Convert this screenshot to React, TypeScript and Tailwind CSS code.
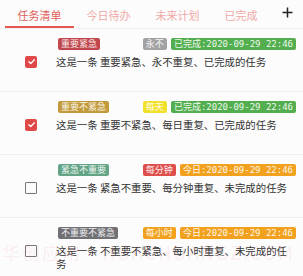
import React from "react";

type Task = {
  level: string;
  levelColor: string;
  repeat: string;
  repeatColor: string;
  date: string;
  dateColor: string;
  done: boolean;
  text: string;
};

const TABS = ["任务清单", "今日待办", "未来计划", "已完成"];

const TASKS: Task[] = [
  {
    level: "重要紧急",
    levelColor: "bg-[#c0474d]",
    repeat: "永不",
    repeatColor: "bg-[#a3a3a3]",
    date: "已完成:2020-09-29 22:46",
    dateColor: "bg-[#52ae4e]",
    done: true,
    text: "这是一条 重要紧急、永不重复、已完成的任务",
  },
  {
    level: "重要不紧急",
    levelColor: "bg-[#c39a3b]",
    repeat: "每天",
    repeatColor: "bg-[#f2e12c]",
    date: "已完成:2020-09-29 22:46",
    dateColor: "bg-[#52ae4e]",
    done: true,
    text: "这是一条 重要不紧急、每日重复、已完成的任务",
  },
  {
    level: "紧急不重要",
    levelColor: "bg-[#64a486]",
    repeat: "每分钟",
    repeatColor: "bg-[#de4f4c]",
    date: "今日:2020-09-29 22:46",
    dateColor: "bg-[#f1a11e]",
    done: false,
    text: "这是一条 紧急不重要、每分钟重复、未完成的任务",
  },
  {
    level: "不重要不紧急",
    levelColor: "bg-[#707075]",
    repeat: "每小时",
    repeatColor: "bg-[#f1a11e]",
    date: "今日:2020-09-29 22:46",
    dateColor: "bg-[#f1a11e]",
    done: false,
    text: "这是一条 不重要不紧急、每小时重复、未完成的任务",
  },
];

function Badge({ label, color }: { label: string; color: string }) {
  return (
    <span
      className={`flex h-[12px] items-center rounded-[2px] px-[3px] text-[9px] leading-none text-white/90 ${color}`}
      style={{ fontFamily: '"DejaVu Sans Mono", "Noto Sans CJK SC", monospace' }}
    >
      {label}
    </span>
  );
}

function Checkbox({ checked }: { checked: boolean }) {
  if (checked) {
    return (
      <span className="flex h-[12px] w-[12px] shrink-0 items-center justify-center rounded-[2px] bg-[#e04848]">
        <svg width="9" height="9" viewBox="0 0 10 10" fill="none">
          <path d="M2 5.2 L4.2 7.2 L8.2 3" stroke="white" strokeWidth="1.4" strokeLinecap="round" strokeLinejoin="round" />
        </svg>
      </span>
    );
  }
  return <span className="block h-[12px] w-[12px] shrink-0 rounded-[1px] border-[1.5px] border-[#777]" />;
}

export default function App() {
  return (
    <main
      className="relative h-[276px] w-[303px] overflow-hidden bg-[#fcfcfc]"
      style={{ fontFamily: '"Noto Sans CJK SC", "Noto Sans", sans-serif' }}
    >
      <div className="flex h-[28px] items-stretch pl-[5px] pr-[10px]">
        {TABS.map((tab, i) => (
          <div key={tab} className="flex flex-col">
            <span
              className={`flex-1 px-[12.5px] pt-[9px] text-[11px] leading-[13px] ${
                i === 0 ? "text-[#e0605a]" : "text-[#efa9a6]"
              }`}
            >
              {tab}
            </span>
            <span className={`h-[2px] ${i === 0 ? "bg-[#e2584f]" : "bg-transparent"}`} />
          </div>
        ))}
        <div className="ml-auto flex items-center pb-[3px]">
          <svg width="11" height="11" viewBox="0 0 11 11">
            <path d="M5.5 0.5 V10.5 M0.5 5.5 H10.5" stroke="#222" strokeWidth="1.5" />
          </svg>
        </div>
      </div>

      {TASKS.map((task) => (
        <div key={task.text} className="h-[63px] border-t border-[#efefef] pt-[9px] pl-[25px] pr-[7px]">
          <div className="flex items-center pl-[33px]">
            <Badge label={task.level} color={task.levelColor} />
            <div className="ml-auto flex items-center gap-[4px]">
              <Badge label={task.repeat} color={task.repeatColor} />
              <Badge label={task.date} color={task.dateColor} />
            </div>
          </div>
          <div className="mt-[5px] flex items-start gap-[19px]">
            <span className="block shrink-0 pt-[0.5px]">
              <Checkbox checked={task.done} />
            </span>
            <p className="w-[232px] text-[10.4px] leading-[13px] text-[#333]">{task.text}</p>
          </div>
        </div>
      ))}

      <div className="pointer-events-none absolute left-[2px] top-[243px] whitespace-nowrap text-[18px] leading-none tracking-[2px] text-[#e8527a]/10">
        华创应用・HUACHUANGZ.COM
      </div>
    </main>
  );
}
